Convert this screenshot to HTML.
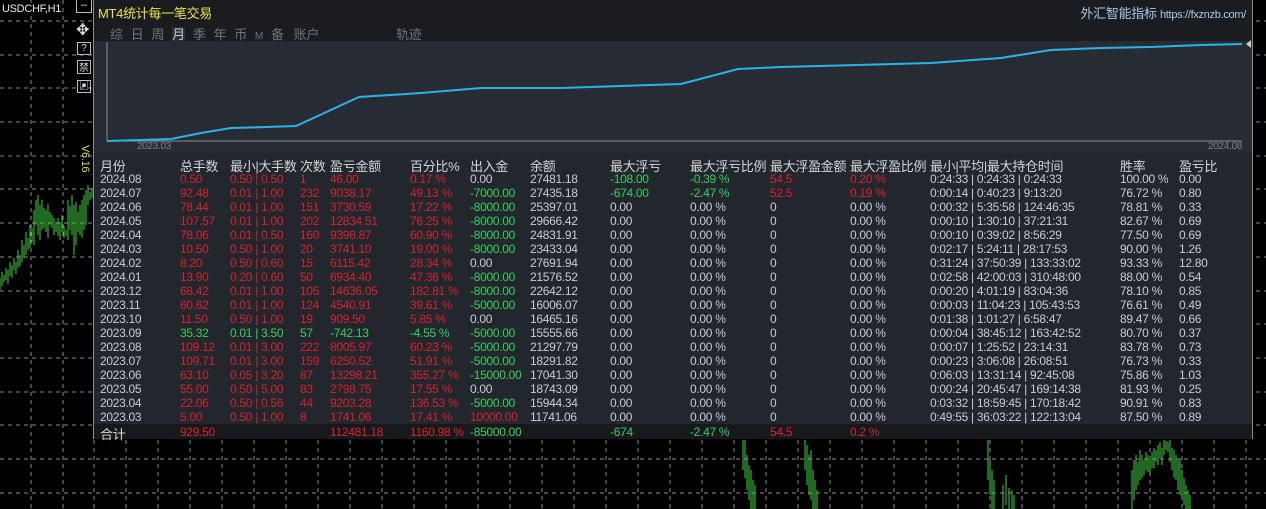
<!DOCTYPE html>
<html><head><meta charset="utf-8"><style>
*{margin:0;padding:0;box-sizing:border-box}
body{width:1266px;height:509px;background:#000;position:relative;overflow:hidden;font-family:"Liberation Sans","Noto Sans CJK SC",sans-serif}
.abs{position:absolute}
#panel{position:absolute;left:93px;top:0;width:1160px;height:439px;background:#22262d;border:1px solid #8a8d92;border-top:none}
.t{position:absolute;font-size:12px;white-space:nowrap;letter-spacing:-0.3px}
.w{color:#c9ccd0}.r{color:#d8222c}.g{color:#2fd35b}.h{color:#d4d6d9;font-size:13px}
</style></head><body>
<svg class="abs" style="left:0;top:0" width="1266" height="509">
<g stroke="#8a8a8a" stroke-dasharray="4,4" stroke-width="1">
<line x1="0" y1="21" x2="1266" y2="21"/><line x1="0" y1="55" x2="1266" y2="55"/><line x1="0" y1="88" x2="1266" y2="88"/><line x1="0" y1="122" x2="1266" y2="122"/><line x1="0" y1="156" x2="1266" y2="156"/><line x1="0" y1="189" x2="1266" y2="189"/><line x1="0" y1="223" x2="1266" y2="223"/><line x1="0" y1="257" x2="1266" y2="257"/><line x1="0" y1="291" x2="1266" y2="291"/><line x1="0" y1="324" x2="1266" y2="324"/><line x1="0" y1="358" x2="1266" y2="358"/><line x1="0" y1="392" x2="1266" y2="392"/><line x1="0" y1="425" x2="1266" y2="425"/><line x1="0" y1="459" x2="1266" y2="459"/><line x1="0" y1="493" x2="1266" y2="493"/>
</g>
<g stroke="#8a8a8a" stroke-dasharray="4,4">
<line x1="31" y1="0" x2="31" y2="509"/><line x1="63" y1="0" x2="63" y2="509"/>
<line x1="734" y1="440" x2="734" y2="509"/><line x1="766" y1="440" x2="766" y2="509"/><line x1="798" y1="440" x2="798" y2="509"/><line x1="830" y1="440" x2="830" y2="509"/><line x1="862" y1="440" x2="862" y2="509"/><line x1="894" y1="440" x2="894" y2="509"/><line x1="926" y1="440" x2="926" y2="509"/><line x1="958" y1="440" x2="958" y2="509"/><line x1="990" y1="440" x2="990" y2="509"/><line x1="1022" y1="440" x2="1022" y2="509"/><line x1="1054" y1="440" x2="1054" y2="509"/><line x1="1086" y1="440" x2="1086" y2="509"/><line x1="1118" y1="440" x2="1118" y2="509"/><line x1="1150" y1="440" x2="1150" y2="509"/><line x1="1182" y1="440" x2="1182" y2="509"/><line x1="1214" y1="440" x2="1214" y2="509"/><line x1="1246" y1="440" x2="1246" y2="509"/>
<line x1="702" y1="440" x2="702" y2="509"/><line x1="670" y1="440" x2="670" y2="509"/><line x1="638" y1="440" x2="638" y2="509"/><line x1="606" y1="440" x2="606" y2="509"/><line x1="574" y1="440" x2="574" y2="509"/><line x1="542" y1="440" x2="542" y2="509"/><line x1="510" y1="440" x2="510" y2="509"/><line x1="478" y1="440" x2="478" y2="509"/><line x1="446" y1="440" x2="446" y2="509"/><line x1="414" y1="440" x2="414" y2="509"/><line x1="382" y1="440" x2="382" y2="509"/><line x1="350" y1="440" x2="350" y2="509"/><line x1="318" y1="440" x2="318" y2="509"/><line x1="286" y1="440" x2="286" y2="509"/><line x1="254" y1="440" x2="254" y2="509"/><line x1="222" y1="440" x2="222" y2="509"/><line x1="190" y1="440" x2="190" y2="509"/><line x1="158" y1="440" x2="158" y2="509"/><line x1="126" y1="440" x2="126" y2="509"/><line x1="94" y1="440" x2="94" y2="509"/>
</g>
<g id="bars" stroke="#3fd43f" stroke-width="1"></g>
</svg>
<script>
(function(){var segs=[[0,278,290],[2,272,286],[4,275,282],[6,268,280],[8,270,284],[10,262,276],[12,265,278],[14,258,270],[16,262,274],[18,250,268],[20,255,266],[22,240,262],[24,245,258],[26,232,255],[28,238,250],[30,225,248],[32,228,242],[34,210,245],[36,200,225],[38,195,235],[40,205,240],[42,200,230],[44,208,228],[46,210,232],[48,204,238],[50,212,225],[52,215,228],[54,218,235],[56,222,232],[58,218,236],[60,222,240],[62,215,232],[64,226,238],[66,230,236],[68,200,240],[70,206,230],[72,195,235],[74,205,255],[76,202,245],[78,212,232],[80,205,235],[82,200,238],[84,195,230],[86,190,225],[88,185,205],[90,192,200],[92,188,198],
[743,440,470],[745,440,478],[747,455,490],[749,465,500],[751,470,509],[753,480,509],[755,485,509],[805,440,470],[807,445,485],[809,455,495],[811,450,500],[813,470,509],[815,480,509],[817,490,509],[988,440,480],[990,460,495],[992,470,509],[994,480,509],[1003,485,509],[1006,475,505],[1009,488,509],[1012,490,509],[1014,495,509],
[1132,470,509],[1134,460,500],[1136,455,490],[1138,462,485],[1140,450,480],[1142,455,478],[1144,460,475],[1146,452,470],[1148,455,472],[1150,458,476],[1152,452,468],[1154,448,468],[1156,450,462],[1158,445,465],[1160,442,458],[1162,448,465],[1164,440,455],[1166,441,450],[1168,442,452],[1170,440,462],[1172,448,470],[1174,450,478],[1176,455,480],[1178,460,490],[1180,458,495],[1182,470,500],[1184,478,505],[1186,485,509],[1188,490,509],[1190,495,509]];
var s="";segs.forEach(function(a){s+='<line x1="'+a[0]+'" y1="'+a[1]+'" x2="'+a[0]+'" y2="'+a[2]+'"/>';});document.getElementById("bars").innerHTML=s;})();
</script>
<div class="t" style="left:2px;top:3px;color:#e8e8e8;font-size:11px;background:#000">USDCHF,H1</div>
<div class="t" style="top:145px;color:#d7d94a;font-size:11px;transform:rotate(90deg);transform-origin:left top;left:91px">V6.16</div>
<div class="abs" style="left:76px;top:0;width:16px;height:13px;border:1px solid #bbb;border-top:none;color:#ddd;font-size:11px;text-align:center;line-height:10px">–</div>
<div class="abs" style="left:76px;top:23px;color:#ddd;font-size:16px;line-height:16px">✥</div>
<div class="abs" style="left:77px;top:42px;width:14px;height:13px;border:1px solid #bbb;color:#ddd;font-size:10px;text-align:center;line-height:12px">?</div>
<div class="abs" style="left:77px;top:60px;width:14px;height:14px;border:1px solid #bbb;color:#ddd;font-size:10px;text-align:center;line-height:12px;font-family:'Noto Sans CJK SC'">禁</div>
<div class="abs" style="left:77px;top:80px;width:14px;height:13px;border:1px solid #bbb;color:#ddd;font-size:10px;text-align:center;line-height:11px">▣</div>
<div id="panel">
<div class="abs" style="left:0;top:0;width:1158px;height:41px;background:#1b1c1f"></div>
<div class="t" style="left:4px;top:3px;color:#e8e24a;font-size:13px">MT4统计每一笔交易</div>
<div class="t" style="right:6px;top:3px;color:#a9c8e8;font-size:13px">外汇智能指标 <span style="font-size:11px">https://fxznzb.com/</span></div>
<div class="t" style="left:16px;top:24px;color:#6f737a;font-size:13px;word-spacing:0"><span style="margin-right:8px">综</span><span style="margin-right:8px">日</span><span style="margin-right:8px">周</span><span style="margin-right:8px;color:#c8ccd2;background:#2b3038">月</span><span style="margin-right:8px">季</span><span style="margin-right:8px">年</span><span style="margin-right:8px">币</span><span style="margin-right:8px;font-size:10px">M</span><span style="margin-right:10px">备</span><span>账户</span><span style="margin-left:77px">轨迹</span></div>
<div class="abs" style="left:0;top:41px;width:1158px;height:112px;background:#272c34"></div>
<svg class="abs" style="left:0;top:0" width="1160" height="160">
<line x1="13" y1="42" x2="13" y2="141" stroke="#8a8d92"/>
<line x1="13" y1="141" x2="1148" y2="141" stroke="#8a8d92"/>
<polyline fill="none" stroke="#2ab4e6" stroke-width="2" points="13,141 77,139 107,133 137,128 172,127 202,126 265,97 327,93 387,88 467,88 527,86 587,84 644,69 687,67 837,63 907,58 957,50 1007,48 1057,47 1107,45 1148,44"/>
<polygon points="1152,44 1157,40 1157,48" fill="#ccc"/>
</svg>
<div class="t" style="left:43px;top:141px;color:#7d828a;font-size:10px">2023.03</div>
<div class="t" style="left:1114px;top:141px;color:#7d828a;font-size:10px">2024.08</div>
<div class="abs" style="left:0;top:424px;width:1158px;height:15px;background:#17181b"></div>
<div id="tbl"></div>
<div class="t h" style="left:6px;top:156px">月份</div><div class="t h" style="left:86px;top:156px">总手数</div><div class="t h" style="left:136px;top:156px">最小|大手数</div><div class="t h" style="left:206px;top:156px">次数</div><div class="t h" style="left:236px;top:156px">盈亏金额</div><div class="t h" style="left:316px;top:156px">百分比%</div><div class="t h" style="left:376px;top:156px">出入金</div><div class="t h" style="left:436px;top:156px">余额</div><div class="t h" style="left:516px;top:156px">最大浮亏</div><div class="t h" style="left:596px;top:156px">最大浮亏比例</div><div class="t h" style="left:676px;top:156px">最大浮盈金额</div><div class="t h" style="left:756px;top:156px">最大浮盈比例</div><div class="t h" style="left:836px;top:156px">最小|平均|最大持仓时间</div><div class="t h" style="left:1026px;top:156px">胜率</div><div class="t h" style="left:1085px;top:156px">盈亏比</div>
<script>
var rows=[
["2024.08","0.50","0.50 | 0.50","1","46.00","0.17 %","0.00","27481.18","-108.00","-0.39 %","54.5","0.20 %","0:24:33 | 0:24:33 | 0:24:33","100.00 %","0.00"],
["2024.07","92.48","0.01 | 1.00","232","9038.17","49.13 %","-7000.00","27435.18","-674.00","-2.47 %","52.5","0.19 %","0:00:14 | 0:40:23 | 9:13:20","76.72 %","0.80"],
["2024.06","78.44","0.01 | 1.00","151","3730.59","17.22 %","-8000.00","25397.01","0.00","0.00 %","0","0.00 %","0:00:32 | 5:35:58 | 124:46:35","78.81 %","0.33"],
["2024.05","107.57","0.01 | 1.00","202","12834.51","76.25 %","-8000.00","29666.42","0.00","0.00 %","0","0.00 %","0:00:10 | 1:30:10 | 37:21:31","82.67 %","0.69"],
["2024.04","78.06","0.01 | 0.50","160","9398.87","60.90 %","-8000.00","24831.91","0.00","0.00 %","0","0.00 %","0:00:10 | 0:39:02 | 8:56:29","77.50 %","0.69"],
["2024.03","10.50","0.50 | 1.00","20","3741.10","19.00 %","-8000.00","23433.04","0.00","0.00 %","0","0.00 %","0:02:17 | 5:24:11 | 28:17:53","90.00 %","1.26"],
["2024.02","8.20","0.50 | 0.60","15","6115.42","28.34 %","0.00","27691.94","0.00","0.00 %","0","0.00 %","0:31:24 | 37:50:39 | 133:33:02","93.33 %","12.80"],
["2024.01","13.90","0.20 | 0.60","50","6934.40","47.36 %","-8000.00","21576.52","0.00","0.00 %","0","0.00 %","0:02:58 | 42:00:03 | 310:48:00","88.00 %","0.54"],
["2023.12","68.42","0.01 | 1.00","105","14636.05","182.81 %","-8000.00","22642.12","0.00","0.00 %","0","0.00 %","0:00:20 | 4:01:19 | 83:04:36","78.10 %","0.85"],
["2023.11","60.62","0.01 | 1.00","124","4540.91","39.61 %","-5000.00","16006.07","0.00","0.00 %","0","0.00 %","0:00:03 | 11:04:23 | 105:43:53","76.61 %","0.49"],
["2023.10","11.50","0.50 | 1.00","19","909.50","5.85 %","0.00","16465.16","0.00","0.00 %","0","0.00 %","0:01:38 | 1:01:27 | 6:58:47","89.47 %","0.66"],
["2023.09","35.32","0.01 | 3.50","57","-742.13","-4.55 %","-5000.00","15555.66","0.00","0.00 %","0","0.00 %","0:00:04 | 38:45:12 | 163:42:52","80.70 %","0.37"],
["2023.08","109.12","0.01 | 3.00","222","8005.97","60.23 %","-5000.00","21297.79","0.00","0.00 %","0","0.00 %","0:00:07 | 1:25:52 | 23:14:31","83.78 %","0.73"],
["2023.07","109.71","0.01 | 3.00","159","6250.52","51.91 %","-5000.00","18291.82","0.00","0.00 %","0","0.00 %","0:00:23 | 3:06:08 | 26:08:51","76.73 %","0.33"],
["2023.06","63.10","0.05 | 3.20","87","13298.21","355.27 %","-15000.00","17041.30","0.00","0.00 %","0","0.00 %","0:06:03 | 13:31:14 | 92:45:08","75.86 %","1.03"],
["2023.05","55.00","0.50 | 5.00","83","2798.75","17.55 %","0.00","18743.09","0.00","0.00 %","0","0.00 %","0:00:24 | 20:45:47 | 169:14:38","81.93 %","0.25"],
["2023.04","22.06","0.50 | 0.56","44","9203.28","136.53 %","-5000.00","15944.34","0.00","0.00 %","0","0.00 %","0:03:32 | 18:59:45 | 170:18:42","90.91 %","0.83"],
["2023.03","5.00","0.50 | 1.00","8","1741.06","17.41 %","10000.00","11741.06","0.00","0.00 %","0","0.00 %","0:49:55 | 36:03:22 | 122:13:04","87.50 %","0.89"]];
var xs=[6,86,136,206,236,316,376,436,516,596,676,756,836,1026,1085];
var h="";
rows.forEach(function(r,i){var y=172+i*14;var g9=r[0]=="2023.09";
r.forEach(function(v,j){var c="w";
if(j>=1&&j<=5)c=g9?"g":"r";
if(j==6)c=v=="0.00"?"w":(v=="10000.00"?"r":"g");
if(j==8||j==9)c=i<2?"g":"w";
if(j==10||j==11)c=i<2?"r":"w";
h+='<div class="t '+c+'" style="left:'+xs[j]+'px;top:'+y+'px">'+v+'</div>';});});
h+='<div class="t h" style="left:6px;top:424px">合计</div>';
var tot=[[86,"929.50","r"],[236,"112481.18","r"],[316,"1160.98 %","r"],[376,"-85000.00","g"],[516,"-674","g"],[596,"-2.47 %","g"],[676,"54.5","r"],[756,"0.2 %","r"]];
tot.forEach(function(t){h+='<div class="t '+t[2]+'" style="left:'+t[0]+'px;top:425px">'+t[1]+'</div>';});
document.getElementById("tbl").outerHTML=h;
</script>
</div>
</body></html>
